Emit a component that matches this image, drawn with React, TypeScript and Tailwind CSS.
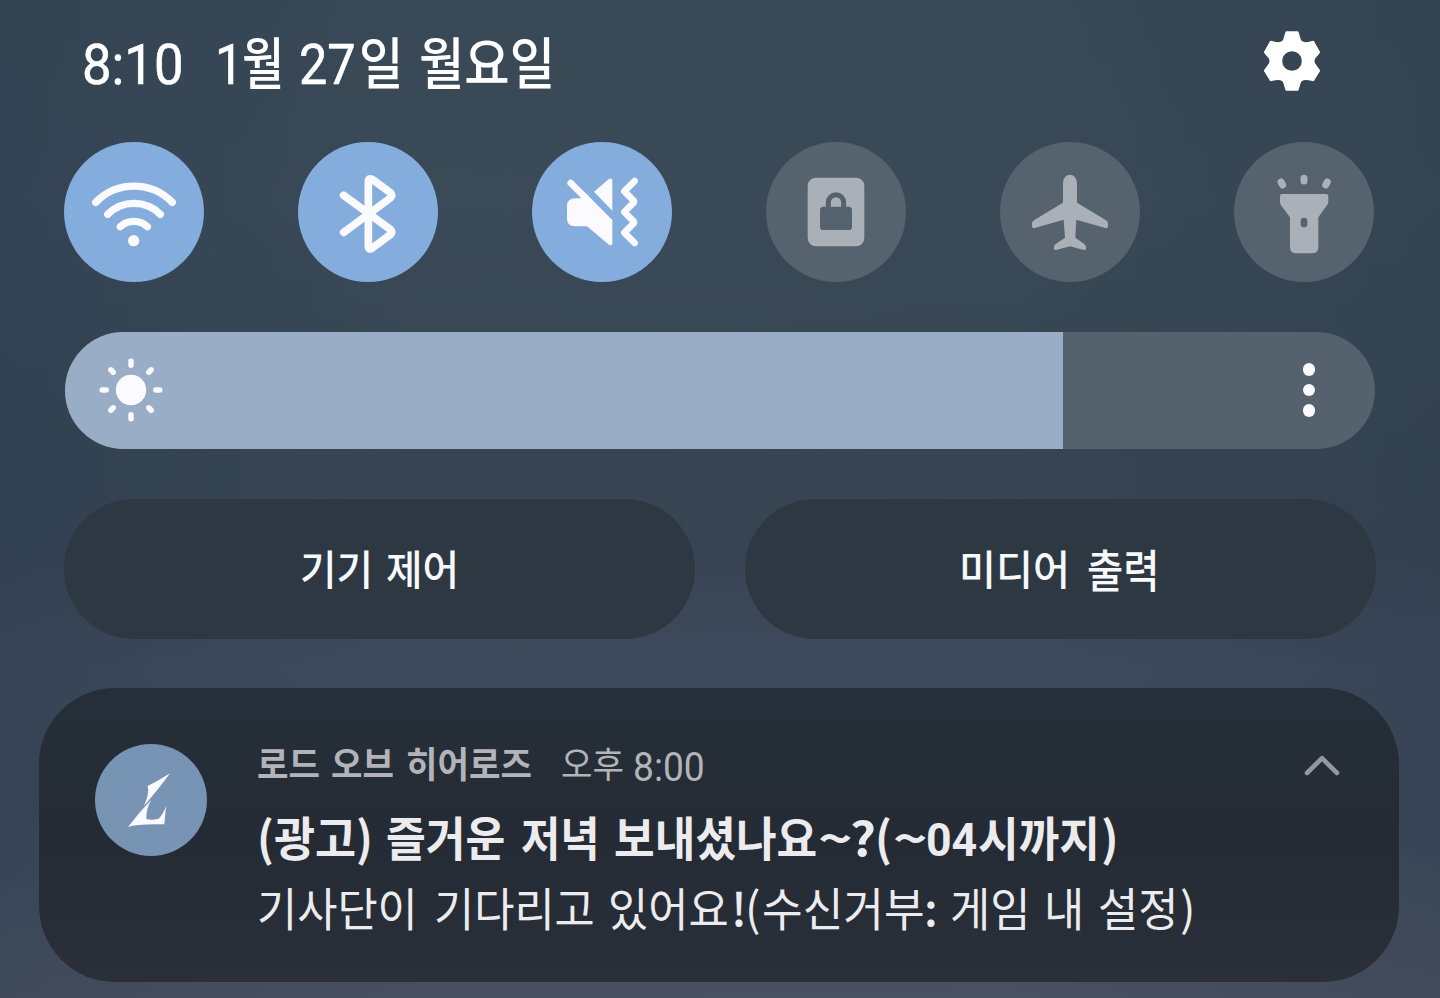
import type { ReactNode } from "react";

function Word({ className, children }: { className: string; children: ReactNode }) {
  return <span className={`block shrink-0 origin-left whitespace-nowrap ${className}`}>{children}</span>;
}

function Num({ children }: { children: ReactNode }) {
  return <span className="font-['Roboto',sans-serif]">{children}</span>;
}

function Toggle({ on, viewBox, label, children }: { on?: boolean; viewBox: string; label: string; children: ReactNode }) {
  return (
    <button
      aria-label={label}
      className={`size-[140px] rounded-full ${on ? "bg-[#84addd] text-[#fafaff]" : "bg-[#56626e] text-[#a9b0b8]"}`}
    >
      <svg viewBox={viewBox} className="size-[140px]" fill="none" stroke="none">
        {children}
      </svg>
    </button>
  );
}

function Header() {
  return (
    <header className="flex h-[142px] items-start pl-[82px] pr-[118px] pt-[30px] text-white">
      <div className="flex pt-[2px] text-[56px] font-medium leading-none">
        <Word className="w-[133px] scale-x-[0.94] font-normal [-webkit-text-stroke:0.6px_white]"><Num>8:10</Num></Word>
        <Word className="w-[27px] scale-x-[0.9] font-normal [-webkit-text-stroke:0.6px_white]"><Num>1</Num></Word>
        <Word className="w-[57px] scale-x-[0.82]">월</Word>
        <Word className="w-[60px] scale-x-[0.9] font-normal [-webkit-text-stroke:0.6px_white]"><Num>27</Num></Word>
        <Word className="w-[60px] scale-x-[0.86]">일</Word>
        <Word className="w-[140px] scale-x-[0.88]">월요일</Word>
      </div>
      <svg viewBox="66 30 180 186" className="ml-auto h-[62px] w-[60px]" fill="#fff" stroke="#fff" strokeWidth="5" strokeLinejoin="round">
        <path
          fillRule="evenodd"
          d="M139 36H173L180 59Q182 66 190 68Q200 71 220 65L238 97L223 115Q219 123 223 131L238 152L220 181Q200 176 190 178Q182 180 180 187L173 210H139L132 187Q130 180 122 178Q112 176 92 181L74 152L89 131Q93 123 89 115L74 97L92 65Q112 71 122 68Q130 66 132 59ZM156 91A32 32 0 1 0 156 155A32 32 0 1 0 156 91Z"
        />
      </svg>
    </header>
  );
}

function Toggles() {
  return (
    <div className="flex justify-between pl-[64px] pr-[66px]">
      <Toggle on label="Wi-Fi" viewBox="42 36 420 420">
        <g stroke="currentColor" strokeWidth="22" strokeLinecap="round">
          <path d="M137 217A160 160 0 0 1 367 217" />
          <path d="M173 253A111 111 0 0 1 331 253" />
          <path d="M211 290A60 60 0 0 1 292 290" />
        </g>
        <circle cx="251" cy="332" r="17" fill="currentColor" />
      </Toggle>
      <Toggle on label="Bluetooth" viewBox="744 36 420 420">
        <path
          d="M881 196L1021 298Q1030 306 1021 314L967 354Q955 362 955 348V156Q955 142 967 148L1021 188Q1030 196 1021 204L881 307"
          stroke="currentColor"
          strokeWidth="23"
          strokeLinecap="round"
          strokeLinejoin="round"
        />
      </Toggle>
      <Toggle on label="진동" viewBox="36 36 420 420">
        <path d="M152 159L205 212" stroke="currentColor" strokeWidth="20" strokeLinecap="round" />
        <path
          d="M141 228Q141 205 166 205H184L196 189L277 270V340Q277 350 267 344L201 289H164Q141 289 141 265ZM222 185L264 149Q277 141 277 153V242Z"
          fill="currentColor"
        />
        <path
          d="M344 153L313 184L341 212Q343 215 341 218L313 246L341 274Q343 277 341 280L313 308L344 339"
          stroke="currentColor"
          strokeWidth="20"
          strokeLinecap="round"
          strokeLinejoin="round"
        />
      </Toggle>
      <Toggle label="화면 잠금" viewBox="738 36 420 420">
        <rect x="863" y="143" width="170" height="206" rx="25" fill="currentColor" />
        <rect x="900" y="230" width="96" height="70" rx="10" fill="#56626e" />
        <path d="M925 234V217A23 23 0 0 1 971 217V234" stroke="#56626e" strokeWidth="15" />
      </Toggle>
      <Toggle label="비행기 모드" viewBox="30 36 420 420">
        <path
          d="M219 162C219 125 261 125 261 162V218L347 270Q354 274 354 281V289Q354 296 346 294L259 269L256 323L283 342Q288 346 288 351V356Q288 361 281 360L240 349L199 360Q192 361 192 356V351Q192 346 197 342L225 323L221 269L134 294Q126 296 126 289V281Q126 274 133 270L219 218Z"
          fill="currentColor"
        />
      </Toggle>
      <Toggle label="손전등" viewBox="732 36 420 420">
        <g stroke="currentColor" strokeWidth="21" strokeLinecap="round">
          <path d="M873 156L878 165M942 145V153M1012 156L1007 165" />
        </g>
        <path
          fillRule="evenodd"
          d="M876 192H1008Q1015 192 1015 199V215Q1015 221 1011 226L985 262V350Q985 370 966 370H919Q900 370 900 350V262L873 226Q870 221 870 215V199Q870 192 876 192ZM932 273V282A10 10 0 0 0 952 282V273A10 10 0 0 0 932 273Z"
          fill="currentColor"
        />
      </Toggle>
    </div>
  );
}

function Brightness() {
  return (
    <div className="ml-[65px] mt-[50px] flex h-[117px] w-[1310px] items-center overflow-hidden rounded-full bg-[#55616d] pb-px">
      <div className="-mb-px flex h-[117px] w-[998px] items-center bg-[#9aadc6] pb-px pl-[33px]">
        <svg viewBox="0 0 66 66" className="size-[66px]" fill="#fafaff" stroke="#fafaff" strokeWidth="5.5" strokeLinecap="round">
          <circle cx="33" cy="33" r="15.2" stroke="none" />
          <path d="M33 4.2V8.2M33 57.8V61.8M4.2 33H8.2M57.8 33H61.8M12.8 12.8L15.2 15.2M50.8 50.8L53.2 53.2M12.8 53.2L15.2 50.8M50.8 15.2L53.2 12.8" />
        </svg>
      </div>
      <div className="ml-[240px] flex flex-col gap-[8px]">
        <i className="size-[12.4px] rounded-full bg-[#fafaff]" />
        <i className="size-[12.4px] rounded-full bg-[#fafaff]" />
        <i className="size-[12.4px] rounded-full bg-[#fafaff]" />
      </div>
    </div>
  );
}

function QuickButtons() {
  return (
    <div className="mt-[50px] flex gap-[50px] pl-[64px] text-[41px] font-medium leading-none text-[#f7f8fa]">
      <button className="flex h-[140px] w-[631px] items-center rounded-full bg-[#2d3843] pb-[4px] pl-[236px] text-left">
        <Word className="w-[86px] scale-x-[0.97]">기기</Word>
        <Word className="scale-x-[0.97]">제어</Word>
      </button>
      <button className="flex h-[140px] w-[631px] items-center rounded-full bg-[#2d3843] pb-[4px] pl-[214px] text-left">
        <Word className="w-[128px] scale-x-[0.98]">미디어</Word>
        <Word className="scale-x-[0.96] scale-y-[1.1] pt-[2px]">출력</Word>
      </button>
    </div>
  );
}

function Notification() {
  return (
    <article className="ml-[39px] mt-[49px] flex h-[294px] w-[1360px] rounded-[76px] bg-gradient-to-b from-[#262f39] via-[#242b35] to-[#2a2f38] pl-[56px] pt-[56px]">
      <svg viewBox="195 192 336 336" className="size-[112px] shrink-0">
        <circle cx="363" cy="360" r="168" fill="#7894b4" />
        <path d="M420 280Q385 303 353 318Q359 340 342 377Q376 340 420 280ZM364 359Q328 396 294 441Q320 431 403 433L408 378Q400 402 386 416Q365 422 349 417Q348 385 364 359Z" fill="#fafaff" />
      </svg>
      <div className="ml-[50px] w-[1000px]">
        <div className="flex h-[68px] items-start text-[36px] leading-none text-[#b3b4ba]">
          <Word className="w-[74px] scale-x-[0.95] font-bold">로드</Word>
          <Word className="w-[75px] scale-x-[0.95] font-bold">오브</Word>
          <Word className="w-[155px] scale-x-[0.95] font-bold">히어로즈</Word>
          <Word className="w-[72px] scale-x-[0.95]">오후</Word>
          <Word className="scale-x-[0.93] text-[40px]"><Num>8:00</Num></Word>
        </div>
        <div className="flex h-[71px] items-start text-[47px] font-bold leading-none text-[#ececee]">
          <Word className="w-[129px] scale-x-[0.95]">(광고)</Word>
          <Word className="w-[135px] scale-x-[0.92]">즐거운</Word>
          <Word className="w-[93px] scale-x-[0.91]">저녁</Word>
          <Word className="w-[204px] scale-x-[0.94]">보내셨나요</Word>
          <Word className="w-[32px] scale-x-[1.25]">~</Word>
          <Word className="w-[25px] scale-x-[1.08]">?</Word>
          <Word className="w-[18px] scale-x-[0.95]">(</Word>
          <Word className="w-[33px] scale-x-[1.25]">~</Word>
          <Word className="w-[52px] scale-x-[0.95]"><Num>04</Num></Word>
          <Word className="w-[123px] scale-x-[0.94]">시까지</Word>
          <Word>)</Word>
        </div>
        <div className="flex items-start text-[46px] leading-none text-[#ececee]">
          <Word className="w-[177px] scale-x-[0.95]">기사단이</Word>
          <Word className="w-[174px] scale-x-[0.95]">기다리고</Word>
          <Word className="w-[123px] scale-x-[0.95]">있어요</Word>
          <Word className="w-[14px] font-medium">!</Word>
          <Word className="w-[17px]">(</Word>
          <Word className="w-[162px] scale-x-[0.96]">수신거부</Word>
          <Word className="w-[26px] font-medium">:</Word>
          <Word className="w-[94px] scale-x-[0.95]">게임</Word>
          <Word className="w-[54px] scale-x-[0.95]">내</Word>
          <Word className="w-[82px] scale-x-[0.95]">설정</Word>
          <Word>)</Word>
        </div>
      </div>
      <svg viewBox="0 0 36 22" className="ml-[47px] mt-[11px] h-[22px] w-[36px]" fill="none" stroke="#95979d" strokeWidth="4.6" strokeLinecap="round" strokeLinejoin="round">
        <path d="M3 18L18 3.2L33 18" />
      </svg>
    </article>
  );
}

export default function App() {
  return (
    <main className="h-[998px] w-[1440px] overflow-hidden bg-[linear-gradient(90deg,rgba(38,56,76,0.3)_0%,rgba(64,76,90,0.12)_30%,rgba(56,70,84,0)_70%,rgba(38,54,72,0.25)_100%),linear-gradient(180deg,#384855_0%,#3a4957_20%,#374553_45%,#374453_55%,#3e4a5b_67%,#3c4859_80%,#4a5160_100%)] font-['Noto_Sans_CJK_KR',sans-serif]">
      <Header />
      <Toggles />
      <Brightness />
      <QuickButtons />
      <Notification />
    </main>
  );
}
